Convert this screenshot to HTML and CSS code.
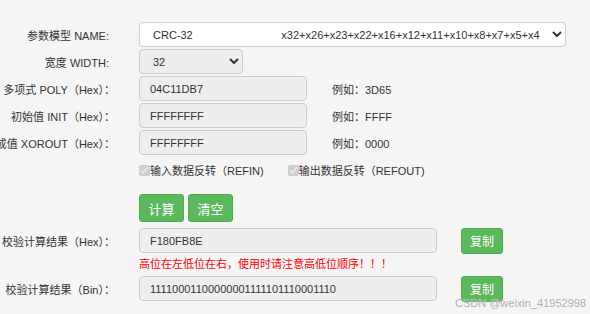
FILE: index.html
```html
<!DOCTYPE html>
<html lang="zh-CN">
<head>
    <meta charset="UTF-8">
    <meta name="viewport" content="width=device-width, initial-scale=1.0">
    <title>CRC 校验计算</title>
    <link rel="stylesheet" href="styles.css">
</head>
<body>
    <div class="crc-form">
        <div class="form-row">
            <label class="row-label ascii" for="model"><span>参数模型 NAME:</span></label>
            <div class="select-wrap select-name">
                <select id="model" class="select white">
                    <option>CRC-32&nbsp;&nbsp;&nbsp;&nbsp;&nbsp;&nbsp;&nbsp;&nbsp;&nbsp;&nbsp;&nbsp;&nbsp;&nbsp;&nbsp;&nbsp;&nbsp;&nbsp;&nbsp;&nbsp;&nbsp;&nbsp;&nbsp;&nbsp;&nbsp;&nbsp;&nbsp;&nbsp;&nbsp;&nbsp;x32+x26+x23+x22+x16+x12+x11+x10+x8+x7+x5+x4+x2+x+1</option>
                </select>
                <svg class="chevron" viewBox="0 0 10 6" width="10" height="6"><path d="M1 1 L5 5 L9 1" fill="none" stroke="#333" stroke-width="2"/></svg>
            </div>
        </div>

        <div class="form-row">
            <label class="row-label ascii" for="width"><span>宽度 WIDTH:</span></label>
            <div class="select-wrap select-width">
                <select id="width" class="select grey">
                    <option>32</option>
                </select>
                <svg class="chevron" viewBox="0 0 10 6" width="10" height="6"><path d="M1 1 L5 5 L9 1" fill="none" stroke="#333" stroke-width="2"/></svg>
            </div>
        </div>

        <div class="form-row">
            <label class="row-label" for="poly"><span>多项式 POLY（Hex）：</span></label>
            <input class="field short" id="poly" value="04C11DB7" readonly>
            <span class="hint">例如：3D65</span>
        </div>

        <div class="form-row">
            <label class="row-label" for="init"><span>初始值 INIT（Hex）：</span></label>
            <input class="field short" id="init" value="FFFFFFFF" readonly>
            <span class="hint">例如：FFFF</span>
        </div>

        <div class="form-row">
            <label class="row-label" for="xorout"><span>结果异或值 XOROUT（Hex）：</span></label>
            <input class="field short" id="xorout" value="FFFFFFFF" readonly>
            <span class="hint">例如：0000</span>
        </div>

        <div class="form-row check-row">
            <span class="row-label"></span>
            <label class="check"><input type="checkbox" checked disabled>输入数据反转（REFIN)</label>
            <label class="check"><input type="checkbox" checked disabled>输出数据反转（REFOUT)</label>
        </div>

        <div class="form-row button-row">
            <span class="row-label"></span>
            <button class="btn">计算</button>
            <button class="btn">清空</button>
        </div>

        <div class="form-row result-row">
            <label class="row-label" for="hex"><span>校验计算结果（Hex）：</span></label>
            <input class="field long" id="hex" value="F180FB8E" readonly>
            <button class="btn copy">复制</button>
        </div>

        <div class="form-row note-row">
            <span class="row-label"></span>
            <span class="note">高位在左低位在右，使用时请注意高低位顺序！！！</span>
        </div>

        <div class="form-row result-row">
            <label class="row-label" for="bin"><span>校验计算结果（Bin）：</span></label>
            <input class="field long" id="bin" value="11110001100000001111101110001110" readonly>
            <button class="btn copy">复制</button>
        </div>
    </div>

    <div class="watermark">CSDN @weixin_41952998</div>
</body>
</html>
```

FILE: styles.css
```css
html, body {
    margin: 0;
    padding: 0;
    height: 100%;
}

body {
    font-family: "Liberation Sans", Arial, "Noto Sans CJK SC", sans-serif;
    font-size: 11px;
    color: #333;
    background-color: #f5f5f5;
    overflow: hidden;
    position: relative;
}

.crc-form {
    padding-top: 22px;
    display: flex;
    flex-direction: column;
    gap: 2px;
}

.form-row {
    display: flex;
    align-items: center;
    height: 25px;
}

.row-label {
    width: 115px;
    flex-shrink: 0;
    margin-right: 24px;
    display: flex;
    justify-content: flex-end;
    white-space: nowrap;
}

.row-label.ascii {
    padding-right: 6px;
    box-sizing: border-box;
}

.select-wrap {
    position: relative;
    height: 25px;
}

.select-name {
    width: 427px;
}

.select-width {
    width: 104px;
}

.select {
    appearance: none;
    -webkit-appearance: none;
    width: 100%;
    height: 100%;
    box-sizing: border-box;
    border: 1px solid #ccc;
    border-radius: 4px;
    padding: 0 25px 0 13px;
    font-family: inherit;
    font-size: 11px;
    color: #333;
}

.select.white {
    background: #fff;
}

.select.grey {
    background: #eee;
}

.chevron {
    position: absolute;
    right: 4px;
    top: 9px;
    pointer-events: none;
}

.field {
    height: 25px;
    box-sizing: border-box;
    border: 1px solid #ccc;
    border-radius: 4px;
    background: #eee;
    padding: 0 10px;
    font-family: inherit;
    font-size: 11px;
    color: #333;
}

.field.short {
    width: 168px;
}

.field.long {
    width: 298px;
}

.hint {
    margin-left: 25px;
}

.check-row {
    height: 20px;
    margin-top: 3px;
}

.check {
    display: flex;
    align-items: center;
    margin-right: 24px;
}

.check input {
    margin: 0;
    width: 11px;
    height: 11px;
}

.button-row {
    height: 28px;
    margin-top: 12px;
}

.button-row .btn + .btn {
    margin-left: 4px;
}

.btn {
    height: 28px;
    width: 45px;
    border: 1px solid #4cae4c;
    border-radius: 3px;
    background: #5cb85c;
    color: #fff;
    font-family: "Noto Sans CJK SC", sans-serif;
    font-size: 13px;
    padding: 0;
    cursor: pointer;
}

.result-row {
    margin-top: 4px;
}

.copy {
    width: 42px;
    height: 26px;
    margin-left: 24px;
    font-size: 12px;
}

.note-row {
    height: 15px;
}

.note {
    color: #f00;
}

.watermark {
    position: absolute;
    right: 4px;
    bottom: 5px;
    font-size: 11px;
    color: rgba(150, 150, 150, 0.8);
    text-shadow: 0 0 1px #fff;
}
```
